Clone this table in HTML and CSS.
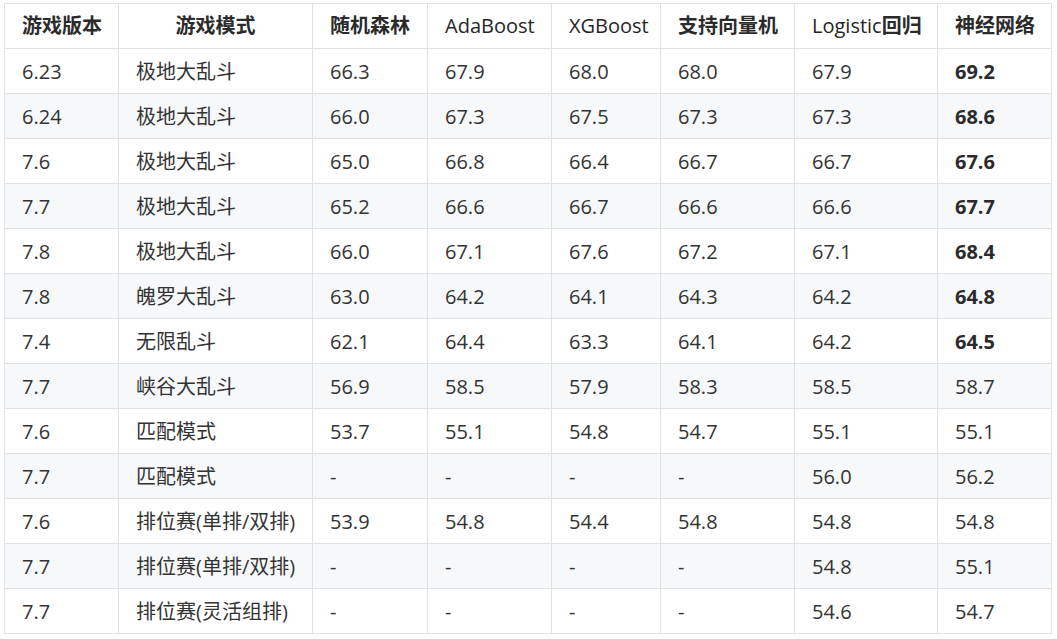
FILE: index.html
```html
<!DOCTYPE html>
<html lang="zh-CN">
<head>
<meta charset="utf-8">
<title>游戏模式胜率预测</title>
<link rel="stylesheet" href="styles.css">
</head>
<body>
<table class="results">
  <colgroup>
    <col class="c-ver"><col class="c-mode"><col class="c-rf"><col class="c-ada"><col class="c-xgb"><col class="c-svm"><col class="c-lr"><col class="c-nn">
  </colgroup>
  <thead>
    <tr><th>游戏版本</th><th class="center">游戏模式</th><th>随机森林</th><th><span class="latin">AdaBoost</span></th><th><span class="latin">XGBoost</span></th><th>支持向量机</th><th><span class="latin">Logistic</span>回归</th><th>神经网络</th></tr>
  </thead>
  <tbody>
    <tr><td>6.23</td><td>极地大乱斗</td><td>66.3</td><td>67.9</td><td>68.0</td><td>68.0</td><td>67.9</td><td class="best">69.2</td></tr>
    <tr><td>6.24</td><td>极地大乱斗</td><td>66.0</td><td>67.3</td><td>67.5</td><td>67.3</td><td>67.3</td><td class="best">68.6</td></tr>
    <tr><td>7.6</td><td>极地大乱斗</td><td>65.0</td><td>66.8</td><td>66.4</td><td>66.7</td><td>66.7</td><td class="best">67.6</td></tr>
    <tr><td>7.7</td><td>极地大乱斗</td><td>65.2</td><td>66.6</td><td>66.7</td><td>66.6</td><td>66.6</td><td class="best">67.7</td></tr>
    <tr><td>7.8</td><td>极地大乱斗</td><td>66.0</td><td>67.1</td><td>67.6</td><td>67.2</td><td>67.1</td><td class="best">68.4</td></tr>
    <tr><td>7.8</td><td>魄罗大乱斗</td><td>63.0</td><td>64.2</td><td>64.1</td><td>64.3</td><td>64.2</td><td class="best">64.8</td></tr>
    <tr><td>7.4</td><td>无限乱斗</td><td>62.1</td><td>64.4</td><td>63.3</td><td>64.1</td><td>64.2</td><td class="best">64.5</td></tr>
    <tr><td>7.7</td><td>峡谷大乱斗</td><td>56.9</td><td>58.5</td><td>57.9</td><td>58.3</td><td>58.5</td><td>58.7</td></tr>
    <tr><td>7.6</td><td>匹配模式</td><td>53.7</td><td>55.1</td><td>54.8</td><td>54.7</td><td>55.1</td><td>55.1</td></tr>
    <tr><td>7.7</td><td>匹配模式</td><td>-</td><td>-</td><td>-</td><td>-</td><td>56.0</td><td>56.2</td></tr>
    <tr><td>7.6</td><td>排位赛(单排/双排)</td><td>53.9</td><td>54.8</td><td>54.4</td><td>54.8</td><td>54.8</td><td>54.8</td></tr>
    <tr><td>7.7</td><td>排位赛(单排/双排)</td><td>-</td><td>-</td><td>-</td><td>-</td><td>54.8</td><td>55.1</td></tr>
    <tr><td>7.7</td><td>排位赛(灵活组排)</td><td>-</td><td>-</td><td>-</td><td>-</td><td>54.6</td><td>54.7</td></tr>
  </tbody>
</table>
</body>
</html>
```

FILE: styles.css
```css
html, body {
  margin: 0;
  padding: 0;
  background: #ffffff;
}

body {
  font-family: "Segoe UI", "Open Sans", "Noto Sans CJK SC", sans-serif;
  font-size: 20px;
  color: #333333;
}

.results {
  margin: 3px 0 0 4px;
  width: 1048px;
  border-collapse: collapse;
  table-layout: fixed;
}

.c-ver { width: 114px; }
.c-mode { width: 194px; }
.c-rf { width: 115px; }
.c-ada { width: 124px; }
.c-xgb { width: 109px; }
.c-svm { width: 134px; }
.c-lr { width: 143px; }
.c-nn { width: 114px; }

.results th,
.results td {
  border: 1px solid #dfe2e5;
  padding: 1px 0 0 17px;
  height: 43px;
  line-height: 30px;
  text-align: left;
  white-space: nowrap;
  vertical-align: middle;
}

.results th {
  font-weight: 700;
  color: #2b2b2b;
  padding-top: 0;
  height: 44px;
}

.results th .latin {
  font-weight: 500;
  color: #262626;
}

.results th.center {
  text-align: center;
  padding: 0;
}

.results tbody tr:nth-child(2n) {
  background: #f6f8fa;
}

.results td.best {
  font-weight: 700;
  color: #2b2b2b;
}
```
